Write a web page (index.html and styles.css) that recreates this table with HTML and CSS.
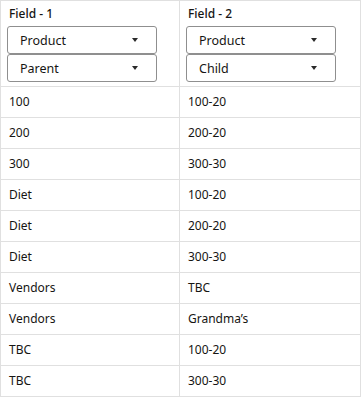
FILE: index.html
```html
<!DOCTYPE html>
<html lang="en">
<head>
<meta charset="utf-8">
<title>Fields</title>
<link rel="stylesheet" href="styles.css">
</head>
<body>
<div class="grid">
  <div class="cell head">
    <div class="label">Field - 1</div>
    <div class="select"><span>Product</span><span class="caret"></span></div>
    <div class="select"><span>Parent</span><span class="caret"></span></div>
  </div>
  <div class="cell head">
    <div class="label">Field - 2</div>
    <div class="select"><span>Product</span><span class="caret"></span></div>
    <div class="select"><span>Child</span><span class="caret"></span></div>
  </div>
  <div class="cell">100</div><div class="cell">100-20</div>
  <div class="cell">200</div><div class="cell">200-20</div>
  <div class="cell">300</div><div class="cell">300-30</div>
  <div class="cell">Diet</div><div class="cell">100-20</div>
  <div class="cell">Diet</div><div class="cell">200-20</div>
  <div class="cell">Diet</div><div class="cell">300-30</div>
  <div class="cell">Vendors</div><div class="cell">TBC</div>
  <div class="cell">Vendors</div><div class="cell">Grandma’s</div>
  <div class="cell">TBC</div><div class="cell">100-20</div>
  <div class="cell">TBC</div><div class="cell">300-30</div>
</div>
</body>
</html>
```
FILE: styles.css
```css
html, body {
  margin: 0;
  padding: 0;
  background: #ffffff;
}
body {
  font-family: "Noto Sans", "Open Sans", sans-serif;
  font-size: 12px;
  color: #161513;
}
.grid {
  display: grid;
  grid-template-columns: 179px 181px;
  width: 360px;
  border-top: 1px solid #e0e0e0;
  border-left: 1px solid #e0e0e0;
}
.cell {
  height: 30px;
  line-height: 30px;
  padding: 0 8px;
  border-right: 1px solid #e0e0e0;
  border-bottom: 1px solid #e0e0e0;
  white-space: nowrap;
}
.head {
  height: auto;
  line-height: normal;
  padding: 3px 6px 4px;
}
.label {
  height: 20px;
  line-height: 20px;
  padding-left: 2px;
  margin-bottom: 2px;
  font-weight: 500;
}
.select {
  box-sizing: border-box;
  width: 150px;
  height: 28px;
  border: 1px solid #8f8f8f;
  border-radius: 3px;
  padding: 0 18px 0 12px;
  font-size: 12.5px;
  display: flex;
  align-items: center;
  justify-content: space-between;
}
.caret {
  width: 0;
  height: 0;
  border-left: 3.5px solid transparent;
  border-right: 3.5px solid transparent;
  border-top: 4px solid #2a2a2a;
}
```
